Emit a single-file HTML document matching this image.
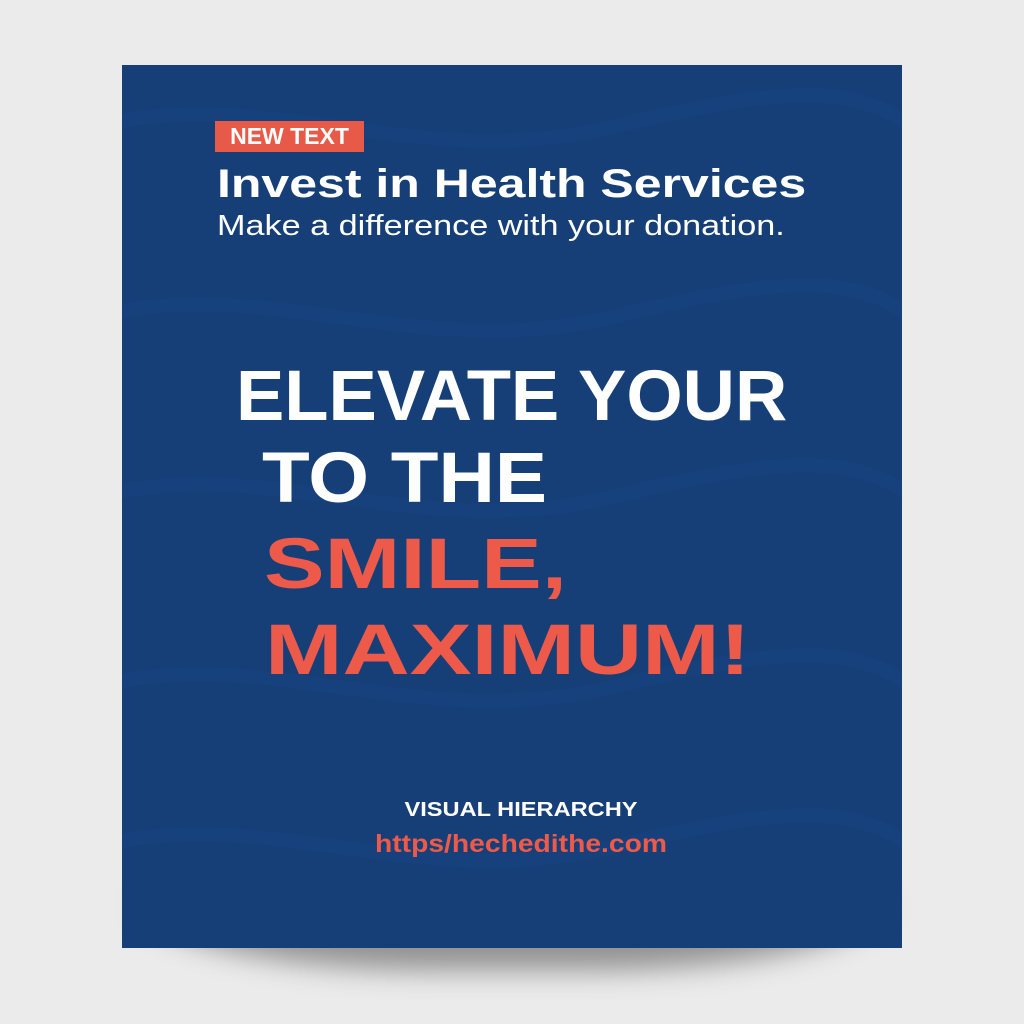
<!DOCTYPE html>
<html><head><meta charset="utf-8"><style>
body{margin:0;width:1024px;height:1024px;background:#ebebeb;position:relative;overflow:hidden;font-family:"Liberation Sans",sans-serif}
.shadow{position:absolute;left:140px;top:900px;width:745px;height:70px;background:#555;filter:blur(14px);border-radius:0 0 40% 40%/0 0 100% 100%;opacity:.6}
.poster{position:absolute;left:122px;top:65px;width:780px;height:883px;background:#163f78;overflow:hidden}
.t{position:absolute;white-space:nowrap;font-weight:bold;color:#fff;transform-origin:left top}
.c{transform-origin:center top}
.tag{left:93px;top:56px;height:31px;width:149px;background:#e85a48;font-size:23px;line-height:31px;text-align:center}
.h{left:95px;top:97px;font-size:40px;transform:scaleX(1.25)}
.sub{left:95px;top:145px;font-size:28.5px;font-weight:normal;transform:scaleX(1.2)}
.big{font-size:71px;line-height:1}
.red{color:#ee5a4a}
</style></head><body>
<div class="shadow"></div>
<div class="poster">
<svg width="780" height="883" style="position:absolute;left:0;top:0" fill="none" stroke="#1a4683" stroke-width="14" opacity=".4">
<path d="M-20 60 C150 20 300 110 500 60 S750 30 800 70"/>
<path d="M-20 250 C150 210 300 300 500 250 S750 220 800 260"/>
<path d="M-20 430 C150 390 300 480 500 430 S750 400 800 440"/>
<path d="M-20 620 C150 580 300 670 500 620 S750 590 800 630"/>
<path d="M-20 780 C150 740 300 830 500 780 S750 750 800 790"/>
</svg>
<div class="t tag">NEW TEXT</div>
<div class="t h">Invest in Health Services</div>
<div class="t sub">Make a difference with your donation.</div>
<div class="t big" style="left:114px;top:296px;transform:scaleX(1.02)">ELEVATE YOUR</div>
<div class="t big" style="left:140px;top:378px;transform:scaleX(1.1)">TO THE</div>
<div class="t big red" style="left:142px;top:464px;transform:scaleX(1.28)">SMILE,</div>
<div class="t big red" style="left:143px;top:550px;transform:scaleX(1.31)">MAXIMUM!</div>
<div class="t c" style="left:0;width:798px;text-align:center;top:734px;font-size:20px;transform:scaleX(1.18)">VISUAL HIERARCHY</div>
<div class="t c red" style="left:0;width:798px;text-align:center;top:765px;font-size:25px;transform:scaleX(1.13)">https/hechedithe.com</div>
</div>
</body></html>
